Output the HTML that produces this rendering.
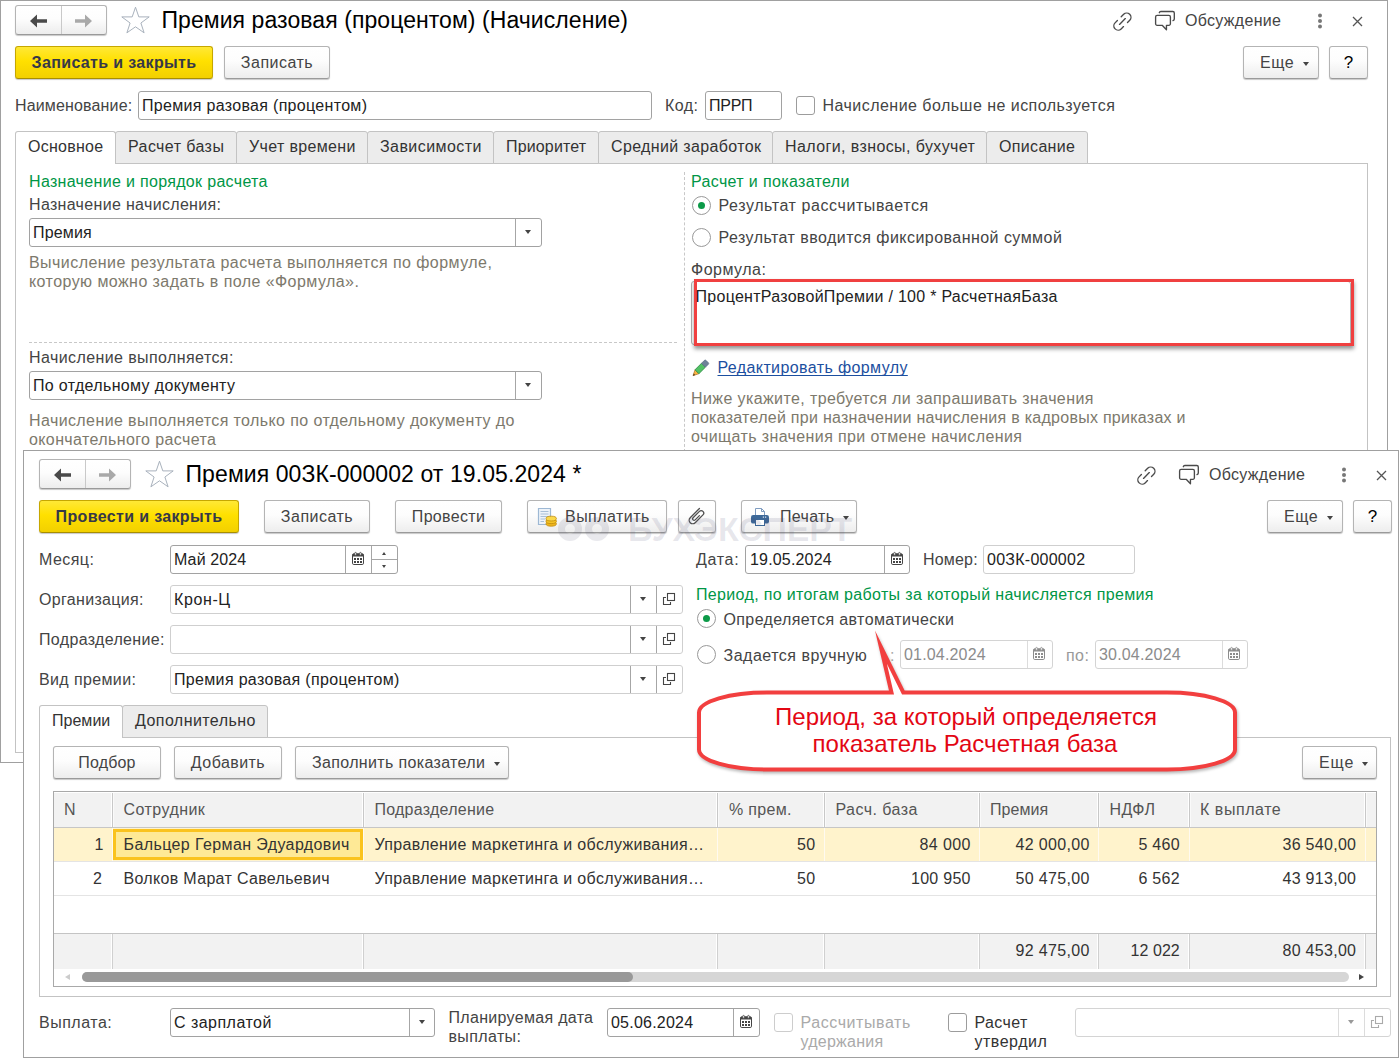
<!DOCTYPE html>
<html lang="ru"><head><meta charset="utf-8"><title>Премия разовая (процентом)</title>
<style>
*{box-sizing:border-box;margin:0;padding:0}
html,body{width:1399px;height:1058px;overflow:hidden;background:#fff}
body{font-family:"Liberation Sans",sans-serif;font-size:16px;color:#333;position:relative;line-height:18px}
.a{position:absolute;white-space:nowrap}
.win{position:absolute;background:#fff;border:1px solid #a0a0a0}
.t{position:absolute;white-space:nowrap;line-height:18px;height:18px}
.g{color:#009646}
.h{color:#7d796c}
.d{color:#a0a0a0}
.ttl{position:absolute;white-space:nowrap;font-size:23px;line-height:26px;color:#000}
.btn{position:absolute;height:33px;border:1px solid #b4b4b4;border-bottom-color:#9a9a9a;border-radius:3px;background:linear-gradient(#ffffff 0%,#fdfdfd 45%,#ededed 100%);box-shadow:0 1px 1px rgba(0,0,0,.22);text-align:center;line-height:32px;color:#444;white-space:nowrap}
.ybtn{background:linear-gradient(#ffe836 0%,#ffe000 45%,#f2d000 100%);border-color:#c6a700;border-bottom-color:#a88e00;font-weight:bold;color:#363848}
.inp{position:absolute;height:29px;border:1px solid #a2a2a2;border-radius:3px;background:#fff;line-height:28px;padding-left:3px;color:#222;white-space:nowrap;overflow:hidden}
.inp.dis{border-color:#d4d4d4;color:#8c8c8c}
.dv{position:absolute;top:0;bottom:0;width:1px;background:#a6a6a6}
.dis .dv{background:#dcdcdc}
.tab{position:absolute;height:33px;border:1px solid #c3c3c3;border-radius:3px 3px 0 0;background:#ececec;line-height:30px;padding-left:12px;color:#333;white-space:nowrap}
.tab.on{background:#fff;border-bottom:0;z-index:2}
.panel{position:absolute;border:1px solid #c3c3c3;background:#fff}
.cb{position:absolute;width:19px;height:19px;border:1px solid #9c9c9c;border-radius:3px;background:#fff}
.rd{position:absolute;width:19px;height:19px;border:1px solid #999;border-radius:50%;background:#fff}
.rd.on::after{content:"";position:absolute;left:5px;top:5px;width:7px;height:7px;border-radius:50%;background:#0c9a48}
.arr{position:absolute;width:0;height:0;border-left:3px solid transparent;border-right:3px solid transparent;border-top:4px solid #444}
svg{position:absolute;overflow:visible}
</style></head><body>
<!-- WIN1 -->
<div class="win" id="w1" style="left:0;top:0;width:1388px;height:763px"></div>

<!-- header 1 -->
<div class="btn" style="left:15px;top:5px;width:92px;height:30px"><div class="dv" style="left:45px;background:#c9c9c9"></div>
<svg style="left:14px;top:7.5px" width="18" height="14" viewBox="0 0 18 14"><path d="M0 7 L7 0.5 L7 5.3 L17 5.3 L17 8.7 L7 8.7 L7 13.5 Z" fill="#4a4a4a"></path></svg>
<svg style="left:58px;top:7.5px" width="18" height="14" viewBox="0 0 18 14"><path d="M18 7 L11 0.5 L11 5.3 L1 5.3 L1 8.7 L11 8.7 L11 13.5 Z" fill="#a9a9a9"></path></svg>
</div>
<svg style="left:120px;top:5px" width="31" height="30" viewBox="0 0 31 30"><path d="M15.5 2.2 L18.8 11.9 L29.2 11.9 L20.9 18 L24.1 27.8 L15.5 21.8 L6.9 27.8 L10.1 18 L1.8 11.9 L12.2 11.9 Z" fill="#fff" stroke="#a3adb8" stroke-width="0.95" stroke-linejoin="miter"></path></svg>
<div class="ttl" style="left: 161.5px; top: 7px; letter-spacing: 0.07px;">Премия разовая (процентом) (Начисление)</div>
<svg style="left:1111px;top:11px" width="22" height="20" viewBox="0 0 22 20"><g fill="none" stroke="#4a4a4a" stroke-width="1.35" stroke-linecap="round"><path d="M10.2 5.7 L12.66 3.26 A4.3 4.3 0 0 1 18.74 9.34 L16.5 11.6"></path><path d="M6.4 9.5 L4.06 11.86 A4.3 4.3 0 0 0 10.14 17.94 L12.5 15.6"></path><path d="M8.5 13.4 L14.3 7.6"></path></g></svg>
<svg style="left:1154px;top:10px" width="23" height="21" viewBox="0 0 23 21"><g fill="none" stroke="#4a4a4a" stroke-width="1.35" stroke-linejoin="round" stroke-linecap="round"><path d="M5.3 2.7 Q5.6 1.5 6.8 1.5 H18.8 a1.5 1.5 0 0 1 1.5 1.5 V9 Q20.3 10.3 19 10.6"></path><path d="M3.1 5.4 H14.9 a1.5 1.5 0 0 1 1.5 1.5 V13.8 a1.5 1.5 0 0 1 -1.5 1.5 H12.45 V19.8 L8.2 15.3 H3.1 a1.5 1.5 0 0 1 -1.5 -1.5 V6.9 a1.5 1.5 0 0 1 1.5 -1.5 Z" fill="#fff"></path></g></svg>
<div class="t" style="left: 1185px; top: 12px; color: rgb(68, 68, 68); letter-spacing: 0.308px;">Обсуждение</div>
<svg style="left:1317px;top:13px" width="6" height="16" viewBox="0 0 6 16"><circle cx="3" cy="2.5" r="2" fill="#777"></circle><circle cx="3" cy="8" r="2" fill="#777"></circle><circle cx="3" cy="13.5" r="2" fill="#777"></circle></svg>
<svg style="left:1352px;top:16px" width="11" height="11" viewBox="0 0 11 11"><path d="M1 1 L10 10 M10 1 L1 10" stroke="#555" stroke-width="1.3" fill="none"></path></svg>
<!-- toolbar 1 -->
<div class="btn ybtn" style="left: 15px; top: 46px; width: 198px; letter-spacing: 0.346px;">Записать и закрыть</div>
<div class="btn" style="left: 224px; top: 46px; width: 106px; letter-spacing: 0.491px;">Записать</div>
<div class="btn" style="left: 1243px; top: 46px; width: 76px; text-align: left; padding-left: 16px; letter-spacing: 0.579px;">Еще<div class="arr" style="left:59px;top:15px;border-width:3px 3px 0 3px;border-top-width:4px"></div></div>
<div class="btn" style="left:1329px;top:46px;width:39px;color:#000;font-size:17px">?</div>
<!-- name row -->
<div class="t" style="left: 15px; top: 97px; color: rgb(68, 68, 68); letter-spacing: 0.149px;">Наименование:</div>
<div class="inp" style="left: 138px; top: 91px; width: 514px; letter-spacing: 0.31px;">Премия разовая (процентом)</div>
<div class="t" style="left: 665px; top: 97px; color: rgb(68, 68, 68); letter-spacing: 0.411px;">Код:</div>
<div class="inp" style="left: 705px; top: 91px; width: 77px; letter-spacing: -0.261px;">ПРРП</div>
<div class="cb" style="left:796px;top:96px"></div>
<div class="t" style="left: 822.5px; top: 97px; color: rgb(68, 68, 68); letter-spacing: 0.465px;">Начисление больше не используется</div>
<!-- tabs 1 -->
<div class="panel" style="left:15px;top:163px;width:1353px;height:590px"></div>
<div class="tab on" style="left: 15px; top: 131px; width: 101px; letter-spacing: 0.248px;">Основное</div>
<div class="tab" style="left: 115px; top: 131px; width: 122px; letter-spacing: 0.419px;">Расчет базы</div>
<div class="tab" style="left: 236px; top: 131px; width: 132px; letter-spacing: 0.349px;">Учет времени</div>
<div class="tab" style="left: 367px; top: 131px; width: 127px; letter-spacing: 0.426px;">Зависимости</div>
<div class="tab" style="left: 493px; top: 131px; width: 106px; letter-spacing: 0.153px;">Приоритет</div>
<div class="tab" style="left: 598px; top: 131px; width: 175px; letter-spacing: 0.354px;">Средний заработок</div>
<div class="tab" style="left: 772px; top: 131px; width: 215px; letter-spacing: 0.398px;">Налоги, взносы, бухучет</div>
<div class="tab" style="left: 986px; top: 131px; width: 102px; letter-spacing: 0.334px;">Описание</div>
<!-- left col -->
<div class="t g" style="left: 29px; top: 173px; letter-spacing: 0.324px;">Назначение и порядок расчета</div>
<div class="t" style="left: 29px; top: 196px; color: rgb(68, 68, 68); letter-spacing: 0.326px;">Назначение начисления:</div>
<div class="inp" style="left: 29px; top: 218px; width: 513px; letter-spacing: 0.149px;">Премия<div class="dv" style="left:485px"></div><div class="arr" style="left:495px;top:11px"></div></div>
<div class="t h" style="left: 29px; top: 254px; letter-spacing: 0.447px;">Вычисление результата расчета выполняется по формуле,</div>
<div class="t h" style="left: 29px; top: 273px; letter-spacing: 0.432px;">которую можно задать в поле «Формула».</div>
<div class="a" style="left:29px;top:342px;width:648px;border-top:1px dashed #c8c8c8"></div>
<div class="t" style="left: 29px; top: 349px; color: rgb(68, 68, 68); letter-spacing: 0.408px;">Начисление выполняется:</div>
<div class="inp" style="left: 29px; top: 371px; width: 513px; letter-spacing: 0.343px;">По отдельному документу<div class="dv" style="left:485px"></div><div class="arr" style="left:495px;top:11px"></div></div>
<div class="t h" style="left: 29px; top: 412px; letter-spacing: 0.398px;">Начисление выполняется только по отдельному документу до</div>
<div class="t h" style="left: 29px; top: 431px; letter-spacing: 0.386px;">окончательного расчета</div>
<div class="a" style="left:684px;top:172px;height:280px;border-left:1px dashed #c8c8c8"></div>
<!-- right col -->
<div class="t g" style="left: 691px; top: 173px; letter-spacing: 0.356px;">Расчет и показатели</div>
<div class="rd on" style="left:692px;top:196px"></div>
<div class="t" style="left: 718.5px; top: 197px; color: rgb(68, 68, 68); letter-spacing: 0.582px;">Результат рассчитывается</div>
<div class="rd" style="left:692px;top:228px"></div>
<div class="t" style="left: 718.5px; top: 229px; color: rgb(68, 68, 68); letter-spacing: 0.458px;">Результат вводится фиксированной суммой</div>
<div class="t" style="left: 691px; top: 261px; color: rgb(68, 68, 68); letter-spacing: 0.479px;">Формула:</div>
<div class="inp" style="left:691px;top:281px;width:660px;height:64px;border-color:#b0b0b0"></div>
<div class="a" style="left:694px;top:279px;width:660px;height:66.5px;border:3px solid #f04040;box-shadow:0 3px 4px rgba(0,0,0,.42)"></div>
<div class="t" style="left: 695.5px; top: 288px; color: rgb(34, 34, 34); letter-spacing: 0.281px;">ПроцентРазовойПремии / 100 * РасчетнаяБаза</div>
<svg style="left:685px;top:350px" width="30" height="30" viewBox="0 0 30 30"><g transform="matrix(0.707 -0.707 0.707 0.707 8 25.7)"><path d="M0 0 L5.6 -2.75 L5.6 2.75 Z" fill="#fbb241" stroke="#a06a20" stroke-width=".6" stroke-linejoin="round"></path><path d="M0 0 L2 -1 L2 1 Z" fill="#4a3420"></path><rect x="5.6" y="-2.75" width="9.2" height="5.5" fill="#52c165" stroke="#2f8e44" stroke-width=".8"></rect><path d="M14.8 -2.75 H19 a1 1 0 0 1 1 1 V1.75 a1 1 0 0 1 -1 1 H14.8 Z" fill="#6e8299" stroke="#5b6e86" stroke-width=".7"></path></g></svg>
<div class="t" style="left: 717.5px; top: 359px; color: rgb(28, 79, 160); text-decoration: underline 1.1px; text-decoration-skip-ink: none; text-underline-offset: 2.4px; letter-spacing: 0.391px;">Редактировать формулу</div>
<div class="t h" style="left: 691px; top: 390px; letter-spacing: 0.397px;">Ниже укажите, требуется ли запрашивать значения</div>
<div class="t h" style="left: 691px; top: 409px; letter-spacing: 0.268px;">показателей при назначении начисления в кадровых приказах и</div>
<div class="t h" style="left: 691px; top: 428px; letter-spacing: 0.384px;">очищать значения при отмене начисления</div>
<!-- WIN2 -->
<div class="win" id="w2" style="left:23px;top:450px;width:1376px;height:608px"></div>
<!-- header 2 -->
<div class="btn" style="left:39px;top:459px;width:92px;height:30px"><div class="dv" style="left:45px;background:#c9c9c9"></div>
<svg style="left:14px;top:7.5px" width="18" height="14" viewBox="0 0 18 14"><path d="M0 7 L7 0.5 L7 5.3 L17 5.3 L17 8.7 L7 8.7 L7 13.5 Z" fill="#4a4a4a"></path></svg>
<svg style="left:58px;top:7.5px" width="18" height="14" viewBox="0 0 18 14"><path d="M18 7 L11 0.5 L11 5.3 L1 5.3 L1 8.7 L11 8.7 L11 13.5 Z" fill="#a9a9a9"></path></svg>
</div>
<svg style="left:144px;top:459px" width="31" height="30" viewBox="0 0 31 30"><path d="M15.5 2.2 L18.8 11.9 L29.2 11.9 L20.9 18 L24.1 27.8 L15.5 21.8 L6.9 27.8 L10.1 18 L1.8 11.9 L12.2 11.9 Z" fill="#fff" stroke="#a3adb8" stroke-width="0.95" stroke-linejoin="miter"></path></svg>
<div class="ttl" style="left: 185.5px; top: 461px; letter-spacing: 0.089px;">Премия 00ЗК-000002 от 19.05.2024 *</div>
<svg style="left:1135px;top:465px" width="22" height="20" viewBox="0 0 22 20"><g fill="none" stroke="#4a4a4a" stroke-width="1.35" stroke-linecap="round"><path d="M10.2 5.7 L12.66 3.26 A4.3 4.3 0 0 1 18.74 9.34 L16.5 11.6"></path><path d="M6.4 9.5 L4.06 11.86 A4.3 4.3 0 0 0 10.14 17.94 L12.5 15.6"></path><path d="M8.5 13.4 L14.3 7.6"></path></g></svg>
<svg style="left:1178px;top:464px" width="23" height="21" viewBox="0 0 23 21"><g fill="none" stroke="#4a4a4a" stroke-width="1.35" stroke-linejoin="round" stroke-linecap="round"><path d="M5.3 2.7 Q5.6 1.5 6.8 1.5 H18.8 a1.5 1.5 0 0 1 1.5 1.5 V9 Q20.3 10.3 19 10.6"></path><path d="M3.1 5.4 H14.9 a1.5 1.5 0 0 1 1.5 1.5 V13.8 a1.5 1.5 0 0 1 -1.5 1.5 H12.45 V19.8 L8.2 15.3 H3.1 a1.5 1.5 0 0 1 -1.5 -1.5 V6.9 a1.5 1.5 0 0 1 1.5 -1.5 Z" fill="#fff"></path></g></svg>
<div class="t" style="left: 1209px; top: 466px; color: rgb(68, 68, 68); letter-spacing: 0.308px;">Обсуждение</div>
<svg style="left:1341px;top:467px" width="6" height="16" viewBox="0 0 6 16"><circle cx="3" cy="2.5" r="2" fill="#777"></circle><circle cx="3" cy="8" r="2" fill="#777"></circle><circle cx="3" cy="13.5" r="2" fill="#777"></circle></svg>
<svg style="left:1376px;top:470px" width="11" height="11" viewBox="0 0 11 11"><path d="M1 1 L10 10 M10 1 L1 10" stroke="#555" stroke-width="1.3" fill="none"></path></svg>
<!-- toolbar 2 -->
<div class="btn ybtn" style="left: 39px; top: 500px; width: 200px; letter-spacing: 0.354px;">Провести и закрыть</div>
<div class="btn" style="left: 264px; top: 500px; width: 106px; letter-spacing: 0.491px;">Записать</div>
<div class="btn" style="left: 395px; top: 500px; width: 107px; letter-spacing: 0.315px;">Провести</div>
<div class="btn" style="left: 527px; top: 500px; width: 140px; text-align: left; padding-left: 37px; letter-spacing: 0.464px;">Выплатить
<svg style="left:9px;top:6px" width="20" height="20" viewBox="0 0 20 20"><path d="M1.5 1.5 H13.5 V17.5 H1.5 Z" fill="#eef3f9" stroke="#9db8d4" stroke-width="1.2"></path><path d="M3.5 4.5 H11.5 M3.5 7 H11.5 M3.5 9.5 H11.5 M3.5 12 H8 M3.5 14.5 H7" stroke="#a9bfd6" stroke-width="1"></path><ellipse cx="14.2" cy="16.8" rx="5.2" ry="2.4" fill="#eeb41c" stroke="#c08c0c" stroke-width=".8"></ellipse><ellipse cx="14.2" cy="14.2" rx="5.2" ry="2.4" fill="#f5c426" stroke="#c08c0c" stroke-width=".8"></ellipse><ellipse cx="14.2" cy="11.6" rx="5.2" ry="2.4" fill="#fbd84a" stroke="#c08c0c" stroke-width=".8"></ellipse></svg></div>
<div class="btn" style="left:678px;top:500px;width:38px">
<svg style="left:0;top:0" width="36" height="31" viewBox="0 0 36 31"><path d="M16.5 0 L3.5 0 A3.5 3.5 0 0 0 3.5 7 L14.5 7 A2.5 2.5 0 0 0 14.5 2 L5.5 2 A1.5 1.5 0 0 0 5.5 5 L11.5 5" fill="none" stroke="#505050" stroke-width="1.3" stroke-linecap="round" transform="matrix(0.707 -0.707 0.707 0.707 8.75 19.2)"></path></svg></div>
<div class="btn" style="left: 741px; top: 500px; width: 116px; text-align: left; padding-left: 38px; letter-spacing: 0.313px;">Печать<div class="arr" style="left:101px;top:15px;border-width:4px 3px 0 3px"></div>
<svg style="left:8px;top:6px" width="20" height="20" viewBox="0 0 20 20"><path d="M5.5 1.5 H11.5 L14.5 4.5 V9 H5.5 Z" fill="#fff" stroke="#7f9cc0" stroke-width="1"></path><path d="M11.5 1.5 V4.5 H14.5" fill="none" stroke="#7f9cc0" stroke-width="1"></path><rect x="1" y="8" width="18" height="8.6" rx="2.2" fill="#3d6898"></rect><rect x="15" y="9.5" width="1.2" height="1.2" fill="#dfe8f2"></rect><rect x="12.8" y="9.5" width="1.2" height="1.2" fill="#dfe8f2"></rect><rect x="5.5" y="12.5" width="9" height="6" fill="#fff" stroke="#3d6898" stroke-width="1"></rect></svg></div>
<div class="a" style="left: 628px; top: 508.5px; font-size: 34px; line-height: 40px; font-weight: bold; color: rgba(70, 70, 110, 0.13); letter-spacing: -0.173px;">БУХЭКСПЕРТ</div><div class="a" style="left:558px;top:517px;width:24px;height:24px;border-radius:50%;border:7px solid rgba(70,70,110,.12)"></div><div class="a" style="left:585px;top:517px;width:24px;height:24px;border-radius:50%;border:7px solid rgba(70,70,110,.12)"></div>
<div class="btn" style="left: 1267px; top: 500px; width: 76px; text-align: left; padding-left: 16px; letter-spacing: 0.579px;">Еще<div class="arr" style="left:59px;top:15px;border-width:4px 3px 0 3px"></div></div>
<div class="btn" style="left:1353px;top:500px;width:39px;color:#000;font-size:17px">?</div>
<!-- fields 2 left -->
<div class="t" style="left: 39px; top: 551px; color: rgb(68, 68, 68); letter-spacing: 0.435px;">Месяц:</div>
<div class="inp" style="left: 170px; top: 545px; width: 228px; letter-spacing: 0.114px;">Май 2024<div class="dv" style="left:174px"></div><div class="dv" style="left:200px"></div>
<svg style="left:181px;top:6px" width="12" height="13" viewBox="0 0 12 13"><rect x="0.5" y="1.8" width="11" height="10.7" rx="1.3" fill="#fff" stroke="#444" stroke-width="1"></rect><path d="M0.5 3 a1.3 1.3 0 0 1 1.3 -1.3 H10.2 a1.3 1.3 0 0 1 1.3 1.3 V4.6 H0.5 Z" fill="#444"></path><rect x="2.7" y="0.4" width="1.7" height="2.9" rx=".85" fill="#fff" stroke="#444" stroke-width=".8"></rect><rect x="7.6" y="0.4" width="1.7" height="2.9" rx=".85" fill="#fff" stroke="#444" stroke-width=".8"></rect><g fill="#444"><rect x="2" y="6" width="2" height="2"></rect><rect x="5" y="6" width="2" height="2"></rect><rect x="8" y="6" width="2" height="2"></rect><rect x="2" y="9" width="2" height="2"></rect><rect x="5" y="9" width="2" height="2"></rect><rect x="8" y="9" width="2" height="2"></rect></g></svg>
<div class="a" style="left:201px;top:13px;width:25px;height:1px;background:#a6a6a6"></div><div class="arr" style="left:210.5px;top:6px;border-width:0 2.5px 3px 2.5px;border-top:0;border-bottom:3px solid #444"></div><div class="arr" style="left:210.5px;top:19px;border-width:3px 2.5px 0 2.5px"></div></div>
<div class="t" style="left: 39px; top: 591px; color: rgb(68, 68, 68); letter-spacing: 0.321px;">Организация:</div>
<div class="inp" style="left: 170px; top: 585px; width: 513px; border-color: rgb(207, 207, 207); letter-spacing: 0.612px;">Крон-Ц<div class="dv" style="left:459px"></div><div class="dv" style="left:485px"></div><div class="arr" style="left:469px;top:11px"></div>
<svg style="left:491px;top:6px" width="14" height="14" viewBox="0 0 14 14"><path d="M4 5.5 H1.5 V12.5 H8.5 V10" fill="none" stroke="#444" stroke-width="1.1"></path><rect x="5.5" y="1.5" width="7" height="7" fill="none" stroke="#444" stroke-width="1.1"></rect></svg></div>
<div class="t" style="left: 39px; top: 631px; color: rgb(68, 68, 68); letter-spacing: 0.34px;">Подразделение:</div>
<div class="inp" style="left:170px;top:625px;width:513px;border-color:#cfcfcf"><div class="dv" style="left:459px"></div><div class="dv" style="left:485px"></div><div class="arr" style="left:469px;top:11px"></div>
<svg style="left:491px;top:6px" width="14" height="14" viewBox="0 0 14 14"><path d="M4 5.5 H1.5 V12.5 H8.5 V10" fill="none" stroke="#444" stroke-width="1.1"></path><rect x="5.5" y="1.5" width="7" height="7" fill="none" stroke="#444" stroke-width="1.1"></rect></svg></div>
<div class="t" style="left: 39px; top: 671px; color: rgb(68, 68, 68); letter-spacing: 0.375px;">Вид премии:</div>
<div class="inp" style="left: 170px; top: 665px; width: 513px; border-color: rgb(207, 207, 207); letter-spacing: 0.329px;">Премия разовая (процентом)<div class="dv" style="left:459px"></div><div class="dv" style="left:485px"></div><div class="arr" style="left:469px;top:11px"></div>
<svg style="left:491px;top:6px" width="14" height="14" viewBox="0 0 14 14"><path d="M4 5.5 H1.5 V12.5 H8.5 V10" fill="none" stroke="#444" stroke-width="1.1"></path><rect x="5.5" y="1.5" width="7" height="7" fill="none" stroke="#444" stroke-width="1.1"></rect></svg></div>
<!-- fields 2 right -->
<div class="t" style="left: 696px; top: 551px; color: rgb(68, 68, 68); letter-spacing: 0.685px;">Дата:</div>
<div class="inp" style="left: 745px; top: 545px; width: 165px; padding-left: 4px; letter-spacing: 0.172px;">19.05.2024<div class="dv" style="left:138px"></div>
<svg style="left:145px;top:6px" width="12" height="13" viewBox="0 0 12 13"><rect x="0.5" y="1.8" width="11" height="10.7" rx="1.3" fill="#fff" stroke="#444" stroke-width="1"></rect><path d="M0.5 3 a1.3 1.3 0 0 1 1.3 -1.3 H10.2 a1.3 1.3 0 0 1 1.3 1.3 V4.6 H0.5 Z" fill="#444"></path><rect x="2.7" y="0.4" width="1.7" height="2.9" rx=".85" fill="#fff" stroke="#444" stroke-width=".8"></rect><rect x="7.6" y="0.4" width="1.7" height="2.9" rx=".85" fill="#fff" stroke="#444" stroke-width=".8"></rect><g fill="#444"><rect x="2" y="6" width="2" height="2"></rect><rect x="5" y="6" width="2" height="2"></rect><rect x="8" y="6" width="2" height="2"></rect><rect x="2" y="9" width="2" height="2"></rect><rect x="5" y="9" width="2" height="2"></rect><rect x="8" y="9" width="2" height="2"></rect></g></svg></div>
<div class="t" style="left: 923px; top: 551px; color: rgb(68, 68, 68); letter-spacing: 0.183px;">Номер:</div>
<div class="inp" style="left: 983px; top: 545px; width: 152px; border-color: rgb(207, 207, 207); letter-spacing: 0.255px;">00ЗК-000002</div>
<div class="t g" style="left: 696px; top: 586px; letter-spacing: 0.345px;">Период, по итогам работы за который начисляется премия</div>
<div class="rd on" style="left:697px;top:609px"></div>
<div class="t" style="left: 723.5px; top: 611px; color: rgb(68, 68, 68); letter-spacing: 0.378px;">Определяется автоматически</div>
<div class="rd" style="left:697px;top:645px"></div>
<div class="t" style="left: 723.5px; top: 647px; color: rgb(68, 68, 68); letter-spacing: 0.499px;">Задается вручную</div>
<div class="t" style="left:890px;top:647px;color:#aaa">:</div>
<div class="inp dis" style="left: 900px; top: 640px; width: 153px; letter-spacing: 0.172px;">01.04.2024<div class="dv" style="left:126px"></div>
<svg style="left:132px;top:6px" width="12" height="13" viewBox="0 0 12 13"><rect x="0.5" y="1.8" width="11" height="10.7" rx="1.3" fill="#fff" stroke="#8c8c8c" stroke-width="1"></rect><path d="M0.5 3 a1.3 1.3 0 0 1 1.3 -1.3 H10.2 a1.3 1.3 0 0 1 1.3 1.3 V4.6 H0.5 Z" fill="#8c8c8c"></path><rect x="2.7" y="0.4" width="1.7" height="2.9" rx=".85" fill="#fff" stroke="#8c8c8c" stroke-width=".8"></rect><rect x="7.6" y="0.4" width="1.7" height="2.9" rx=".85" fill="#fff" stroke="#8c8c8c" stroke-width=".8"></rect><g fill="#8c8c8c"><rect x="2" y="6" width="2" height="2"></rect><rect x="5" y="6" width="2" height="2"></rect><rect x="8" y="6" width="2" height="2"></rect><rect x="2" y="9" width="2" height="2"></rect><rect x="5" y="9" width="2" height="2"></rect><rect x="8" y="9" width="2" height="2"></rect></g></svg></div>
<div class="t" style="left: 1066px; top: 647px; color: rgb(153, 153, 153); letter-spacing: 0.428px;">по:</div>
<div class="inp dis" style="left: 1095px; top: 640px; width: 153px; letter-spacing: 0.172px;">30.04.2024<div class="dv" style="left:126px"></div>
<svg style="left:132px;top:6px" width="12" height="13" viewBox="0 0 12 13"><rect x="0.5" y="1.8" width="11" height="10.7" rx="1.3" fill="#fff" stroke="#8c8c8c" stroke-width="1"></rect><path d="M0.5 3 a1.3 1.3 0 0 1 1.3 -1.3 H10.2 a1.3 1.3 0 0 1 1.3 1.3 V4.6 H0.5 Z" fill="#8c8c8c"></path><rect x="2.7" y="0.4" width="1.7" height="2.9" rx=".85" fill="#fff" stroke="#8c8c8c" stroke-width=".8"></rect><rect x="7.6" y="0.4" width="1.7" height="2.9" rx=".85" fill="#fff" stroke="#8c8c8c" stroke-width=".8"></rect><g fill="#8c8c8c"><rect x="2" y="6" width="2" height="2"></rect><rect x="5" y="6" width="2" height="2"></rect><rect x="8" y="6" width="2" height="2"></rect><rect x="2" y="9" width="2" height="2"></rect><rect x="5" y="9" width="2" height="2"></rect><rect x="8" y="9" width="2" height="2"></rect></g></svg></div>
<!-- tabs 2 -->
<div class="panel" style="left:39px;top:737px;width:1352px;height:260px"></div>
<div class="tab on" style="left: 39px; top: 705px; width: 84px; letter-spacing: 0.021px;">Премии</div>
<div class="tab" style="left: 122px; top: 705px; width: 146px; letter-spacing: 0.434px;">Дополнительно</div>
<!-- table toolbar -->
<div class="btn" style="left: 53px; top: 746px; width: 108px; letter-spacing: 0.159px;">Подбор</div>
<div class="btn" style="left: 174px; top: 746px; width: 108px; letter-spacing: 0.448px;">Добавить</div>
<div class="btn" style="left: 295px; top: 746px; width: 214px; text-align: left; padding-left: 16px; letter-spacing: 0.35px;">Заполнить показатели<div class="arr" style="left:198px;top:15px;border-width:4px 3px 0 3px"></div></div>
<div class="btn" style="left: 1302px; top: 746px; width: 75px; text-align: left; padding-left: 16px; letter-spacing: 0.912px;">Еще<div class="arr" style="left:59px;top:15px;border-width:4px 3px 0 3px"></div></div>
<!-- TABLE -->
<div class="a" style="left:53px;top:791px;width:1324px;height:196px;border:1px solid #a9a9a9;background:#fff"></div>
<div class="a" style="left:54px;top:793px;width:1322px;height:35px;background:#f2f2f2;border-bottom:1px solid #c6c6c6"></div>
<div class="a" style="left:54px;top:828px;width:1322px;height:33px;background:#fff3cc"></div>
<div class="a" style="left:54px;top:861px;width:1322px;height:1px;background:#e4e4e4"></div>
<div class="a" style="left:54px;top:895px;width:1322px;height:1px;background:#e4e4e4"></div>
<div class="a" style="left:54px;top:933px;width:1322px;height:36px;background:#f2f2f2;border-top:1px solid #c4c4c4"></div>
<div class="a" style="left:112px;top:793px;width:1px;height:34px;background:#c8c8c8;box-shadow:-1px 0 0 #fff,1px 0 0 #fafafa"></div>
<div class="a" style="left:112px;top:934px;width:1px;height:35px;background:#d0d0d0;box-shadow:-1px 0 0 #fff"></div>
<div class="a" style="left:112px;top:828px;width:1px;height:33px;background:#fffaf0"></div>
<div class="a" style="left:363px;top:793px;width:1px;height:34px;background:#c8c8c8;box-shadow:-1px 0 0 #fff,1px 0 0 #fafafa"></div>
<div class="a" style="left:363px;top:934px;width:1px;height:35px;background:#d0d0d0;box-shadow:-1px 0 0 #fff"></div>
<div class="a" style="left:363px;top:828px;width:1px;height:33px;background:#fffaf0"></div>
<div class="a" style="left:717px;top:793px;width:1px;height:34px;background:#c8c8c8;box-shadow:-1px 0 0 #fff,1px 0 0 #fafafa"></div>
<div class="a" style="left:717px;top:934px;width:1px;height:35px;background:#d0d0d0;box-shadow:-1px 0 0 #fff"></div>
<div class="a" style="left:717px;top:828px;width:1px;height:33px;background:#fffaf0"></div>
<div class="a" style="left:824px;top:793px;width:1px;height:34px;background:#c8c8c8;box-shadow:-1px 0 0 #fff,1px 0 0 #fafafa"></div>
<div class="a" style="left:824px;top:934px;width:1px;height:35px;background:#d0d0d0;box-shadow:-1px 0 0 #fff"></div>
<div class="a" style="left:824px;top:828px;width:1px;height:33px;background:#fffaf0"></div>
<div class="a" style="left:979px;top:793px;width:1px;height:34px;background:#c8c8c8;box-shadow:-1px 0 0 #fff,1px 0 0 #fafafa"></div>
<div class="a" style="left:979px;top:934px;width:1px;height:35px;background:#d0d0d0;box-shadow:-1px 0 0 #fff"></div>
<div class="a" style="left:979px;top:828px;width:1px;height:33px;background:#fffaf0"></div>
<div class="a" style="left:1098px;top:793px;width:1px;height:34px;background:#c8c8c8;box-shadow:-1px 0 0 #fff,1px 0 0 #fafafa"></div>
<div class="a" style="left:1098px;top:934px;width:1px;height:35px;background:#d0d0d0;box-shadow:-1px 0 0 #fff"></div>
<div class="a" style="left:1098px;top:828px;width:1px;height:33px;background:#fffaf0"></div>
<div class="a" style="left:1189px;top:793px;width:1px;height:34px;background:#c8c8c8;box-shadow:-1px 0 0 #fff,1px 0 0 #fafafa"></div>
<div class="a" style="left:1189px;top:934px;width:1px;height:35px;background:#d0d0d0;box-shadow:-1px 0 0 #fff"></div>
<div class="a" style="left:1189px;top:828px;width:1px;height:33px;background:#fffaf0"></div>
<div class="a" style="left:1365px;top:793px;width:1px;height:34px;background:#c8c8c8;box-shadow:-1px 0 0 #fff,1px 0 0 #fafafa"></div>
<div class="a" style="left:1365px;top:934px;width:1px;height:35px;background:#d0d0d0;box-shadow:-1px 0 0 #fff"></div>
<div class="a" style="left:1365px;top:828px;width:1px;height:33px;background:#fffaf0"></div>
<div class="a" style="left:113px;top:829px;width:250px;height:31px;border:3px solid #fac31e;background:#fee996"></div>
<div class="t" style="left: 64px; top: 801px; color: rgb(85, 85, 85); letter-spacing: 0.738px;">N</div>
<div class="t" style="left: 123.5px; top: 801px; color: rgb(85, 85, 85); letter-spacing: 0.452px;">Сотрудник</div>
<div class="t" style="left: 374.5px; top: 801px; color: rgb(85, 85, 85); letter-spacing: 0.247px;">Подразделение</div>
<div class="t" style="left: 729px; top: 801px; color: rgb(85, 85, 85); letter-spacing: 0.317px;">% прем.</div>
<div class="t" style="left: 835.5px; top: 801px; color: rgb(85, 85, 85); letter-spacing: 0.446px;">Расч. база</div>
<div class="t" style="left: 990px; top: 801px; color: rgb(85, 85, 85); letter-spacing: 0.066px;">Премия</div>
<div class="t" style="left: 1109.5px; top: 801px; color: rgb(85, 85, 85); letter-spacing: 0.407px;">НДФЛ</div>
<div class="t" style="left: 1200px; top: 801px; color: rgb(85, 85, 85); letter-spacing: 0.549px;">К выплате</div>
<div class="t" style="left: 94.5px; top: 836px; color: rgb(51, 51, 51); letter-spacing: -0.606px;">1</div>
<div class="t" style="left: 93px; top: 870px; color: rgb(51, 51, 51); letter-spacing: 0.894px;">2</div>
<div class="t" style="left: 123.5px; top: 836px; color: rgb(51, 51, 51); letter-spacing: 0.395px;">Бальцер Герман Эдуардович</div>
<div class="t" style="left: 123.5px; top: 870px; color: rgb(51, 51, 51); letter-spacing: 0.323px;">Волков Марат Савельевич</div>
<div class="t" style="left: 374.5px; top: 836px; color: rgb(51, 51, 51); letter-spacing: 0.326px;">Управление маркетинга и обслуживания…</div>
<div class="t" style="left: 374.5px; top: 870px; color: rgb(51, 51, 51); letter-spacing: 0.326px;">Управление маркетинга и обслуживания…</div>
<div class="t" style="left: 797px; top: 836px; color: rgb(51, 51, 51); letter-spacing: 0.252px;">50</div>
<div class="t" style="left: 797px; top: 870px; color: rgb(51, 51, 51); letter-spacing: 0.252px;">50</div>
<div class="t" style="left: 919.5px; top: 836px; color: rgb(51, 51, 51); letter-spacing: 0.394px;">84 000</div>
<div class="t" style="left: 911px; top: 870px; color: rgb(51, 51, 51); letter-spacing: 0.279px;">100 950</div>
<div class="t" style="left: 1015.5px; top: 836px; color: rgb(51, 51, 51); letter-spacing: 0.346px;">42 000,00</div>
<div class="t" style="left: 1015.5px; top: 870px; color: rgb(51, 51, 51); letter-spacing: 0.346px;">50 475,00</div>
<div class="t" style="left: 1015.5px; top: 942px; color: rgb(51, 51, 51); letter-spacing: 0.346px;">92 475,00</div>
<div class="t" style="left: 1138.5px; top: 836px; color: rgb(51, 51, 51); letter-spacing: 0.251px;">5 460</div>
<div class="t" style="left: 1138.5px; top: 870px; color: rgb(51, 51, 51); letter-spacing: 0.251px;">6 562</div>
<div class="t" style="left: 1130.5px; top: 942px; color: rgb(51, 51, 51); letter-spacing: 0.06px;">12 022</div>
<div class="t" style="left: 1282.5px; top: 836px; color: rgb(51, 51, 51); letter-spacing: 0.29px;">36 540,00</div>
<div class="t" style="left: 1282.5px; top: 870px; color: rgb(51, 51, 51); letter-spacing: 0.29px;">43 913,00</div>
<div class="t" style="left: 1282.5px; top: 942px; color: rgb(51, 51, 51); letter-spacing: 0.29px;">80 453,00</div>
<div class="a" style="left:82px;top:972px;width:1267px;height:10px;border-radius:5px;background:#d6d6d6"></div>
<div class="a" style="left:82px;top:972px;width:551px;height:10px;border-radius:5px;background:#999"></div>
<div class="a" style="left:65px;top:974px;width:0;height:0;border-top:3px solid transparent;border-bottom:3px solid transparent;border-right:5px solid #ccc"></div>
<div class="a" style="left:1359px;top:974px;width:0;height:0;border-top:3px solid transparent;border-bottom:3px solid transparent;border-left:5px solid #444"></div>
<!-- BOTTOM -->
<div class="t" style="left: 39px; top: 1014px; color: rgb(68, 68, 68); letter-spacing: 0.51px;">Выплата:</div>
<div class="inp" style="left: 170px; top: 1008px; width: 265px; letter-spacing: 0.466px;">С зарплатой<div class="dv" style="left:238px"></div><div class="arr" style="left:248px;top:11px"></div></div>
<div class="t" style="left: 448.5px; top: 1009px; color: rgb(68, 68, 68); letter-spacing: 0.307px;">Планируемая дата</div>
<div class="t" style="left: 448.5px; top: 1028px; color: rgb(68, 68, 68); letter-spacing: 0.371px;">выплаты:</div>
<div class="inp" style="left: 607px; top: 1008px; width: 153px; letter-spacing: 0.222px;">05.06.2024<div class="dv" style="left:125px"></div><svg style="left:132px;top:6px" width="12" height="13" viewBox="0 0 12 13"><rect x="0.5" y="1.8" width="11" height="10.7" rx="1.3" fill="#fff" stroke="#444" stroke-width="1"></rect><path d="M0.5 3 a1.3 1.3 0 0 1 1.3 -1.3 H10.2 a1.3 1.3 0 0 1 1.3 1.3 V4.6 H0.5 Z" fill="#444"></path><rect x="2.7" y="0.4" width="1.7" height="2.9" rx=".85" fill="#fff" stroke="#444" stroke-width=".8"></rect><rect x="7.6" y="0.4" width="1.7" height="2.9" rx=".85" fill="#fff" stroke="#444" stroke-width=".8"></rect><g fill="#444"><rect x="2" y="6" width="2" height="2"></rect><rect x="5" y="6" width="2" height="2"></rect><rect x="8" y="6" width="2" height="2"></rect><rect x="2" y="9" width="2" height="2"></rect><rect x="5" y="9" width="2" height="2"></rect><rect x="8" y="9" width="2" height="2"></rect></g></svg></div>
<div class="cb" style="left:774px;top:1013px;border-color:#cdcdcd"></div>
<div class="t" style="left: 800.5px; top: 1014px; color: rgb(170, 170, 170); letter-spacing: 0.567px;">Рассчитывать</div>
<div class="t" style="left: 800.5px; top: 1033px; color: rgb(170, 170, 170); letter-spacing: 0.24px;">удержания</div>
<div class="cb" style="left:948px;top:1013px"></div>
<div class="t" style="left: 974.5px; top: 1014px; color: rgb(51, 51, 51); letter-spacing: 0.402px;">Расчет</div>
<div class="t" style="left: 974.5px; top: 1033px; color: rgb(51, 51, 51); letter-spacing: 0.514px;">утвердил</div>
<div class="inp dis" style="left:1075px;top:1008px;width:316px"><div class="dv" style="left:262px"></div><div class="dv" style="left:288px"></div><div class="arr" style="left:272px;top:11px;border-top-color:#999"></div>
<svg style="left:294px;top:6px" width="14" height="14" viewBox="0 0 14 14"><path d="M4 5.5 H1.5 V12.5 H8.5 V10" fill="none" stroke="#aaa" stroke-width="1.1"></path><rect x="5.5" y="1.5" width="7" height="7" fill="none" stroke="#aaa" stroke-width="1.1"></rect></svg></div>
<!-- CALLOUT -->
<svg style="left:0;top:0;filter:drop-shadow(1px 2px 1.5px rgba(0,0,0,.28))" width="1399" height="1058" viewBox="0 0 1399 1058"><path d="M 767 692.5 L 891.5 692.5 L 880.9 647 L 903.3 692.5 L 1167 692.5 A 68 20 0 0 1 1235 712.5 L 1235 749.5 A 68 20 0 0 1 1167 769.5 L 767 769.5 A 68 20 0 0 1 699 749.5 L 699 712.5 A 68 20 0 0 1 767 692.5 Z" fill="#fff" stroke="#f23f3f" stroke-width="4" stroke-linejoin="miter" stroke-miterlimit="30"></path></svg>
<div class="a" style="left: 775px; top: 703px; font-size: 24px; line-height: 27px; color: rgb(227, 6, 19); letter-spacing: 0.026px;">Период, за который определяется</div>
<div class="a" style="left: 812.5px; top: 730px; font-size: 24px; line-height: 27px; color: rgb(227, 6, 19); letter-spacing: 0.042px;">показатель Расчетная база</div>

</body></html>
